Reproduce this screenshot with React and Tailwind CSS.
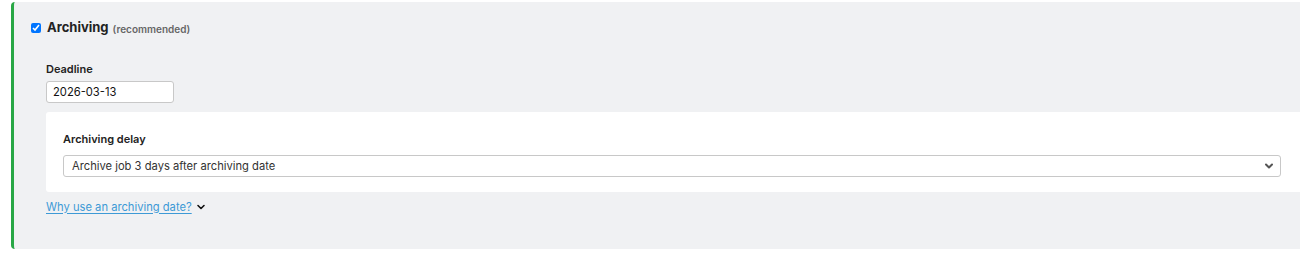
import React from "react";

export default function App() {
  return (
    <div className="w-[1300px] h-[261px] overflow-hidden bg-white pt-[2px] pl-[11px]" style={{ fontFamily: "Inter, 'Noto Sans', sans-serif" }}>
      <div className="w-[1320px] h-[247px] bg-[#f0f1f3] border-l-[3px] border-[#28a745] rounded-[4px] pl-[17px] pt-[16px] text-[#333]">
        <div className="flex items-center h-[20px]">
          <input type="checkbox" defaultChecked className="w-[10px] h-[10px] m-0 accent-[#0075ff]" />
          <span className="ml-[6px] text-[13px] font-bold text-[#222]">Archiving</span>
          <span className="ml-[4px] text-[10px] font-semibold text-[#666] mt-[2px]">(recommended)</span>
        </div>
        <div className="pl-[15px]">
          <div className="mt-[23px] text-[11px] leading-[16px] font-semibold text-[#222]">Deadline</div>
          <div className="mt-[4px] w-[128px] h-[22px] bg-white border border-[#c8c8c8] rounded-[3px] flex items-center pl-[6px] text-[11.2px] text-[#111]">2026-03-13</div>
          <div className="mt-[9px] h-[80px] bg-white rounded-[3px] pl-[17px] pt-[19px]">
            <div className="text-[11px] leading-[16px] font-semibold text-[#222]">Archiving delay</div>
            <div className="mt-[8px] w-[1218px] h-[22px] border border-[#c8c8c8] rounded-[3px] flex items-center justify-between pl-[8px] pr-[6px] text-[11.2px] text-[#333]">
              <span>Archive job 3 days after archiving date</span>
              <svg width="10" height="10" viewBox="0 0 10 10" fill="none" stroke="#555" strokeWidth="2" strokeLinecap="round" strokeLinejoin="round">
                <path d="M2 3.5 L5 6.5 L8 3.5" />
              </svg>
            </div>
          </div>
          <div className="mt-[7px] flex items-center h-[16px]">
            <a href="#" className="text-[11.2px] text-[#3d9ad6] underline underline-offset-2">Why use an archiving date?</a>
            <svg className="ml-[4px]" width="10" height="10" viewBox="0 0 10 10" fill="none" stroke="#111" strokeWidth="1.6" strokeLinecap="round" strokeLinejoin="round">
              <path d="M2 3.5 L5 6.5 L8 3.5" />
            </svg>
          </div>
        </div>
      </div>
    </div>
  );
}
